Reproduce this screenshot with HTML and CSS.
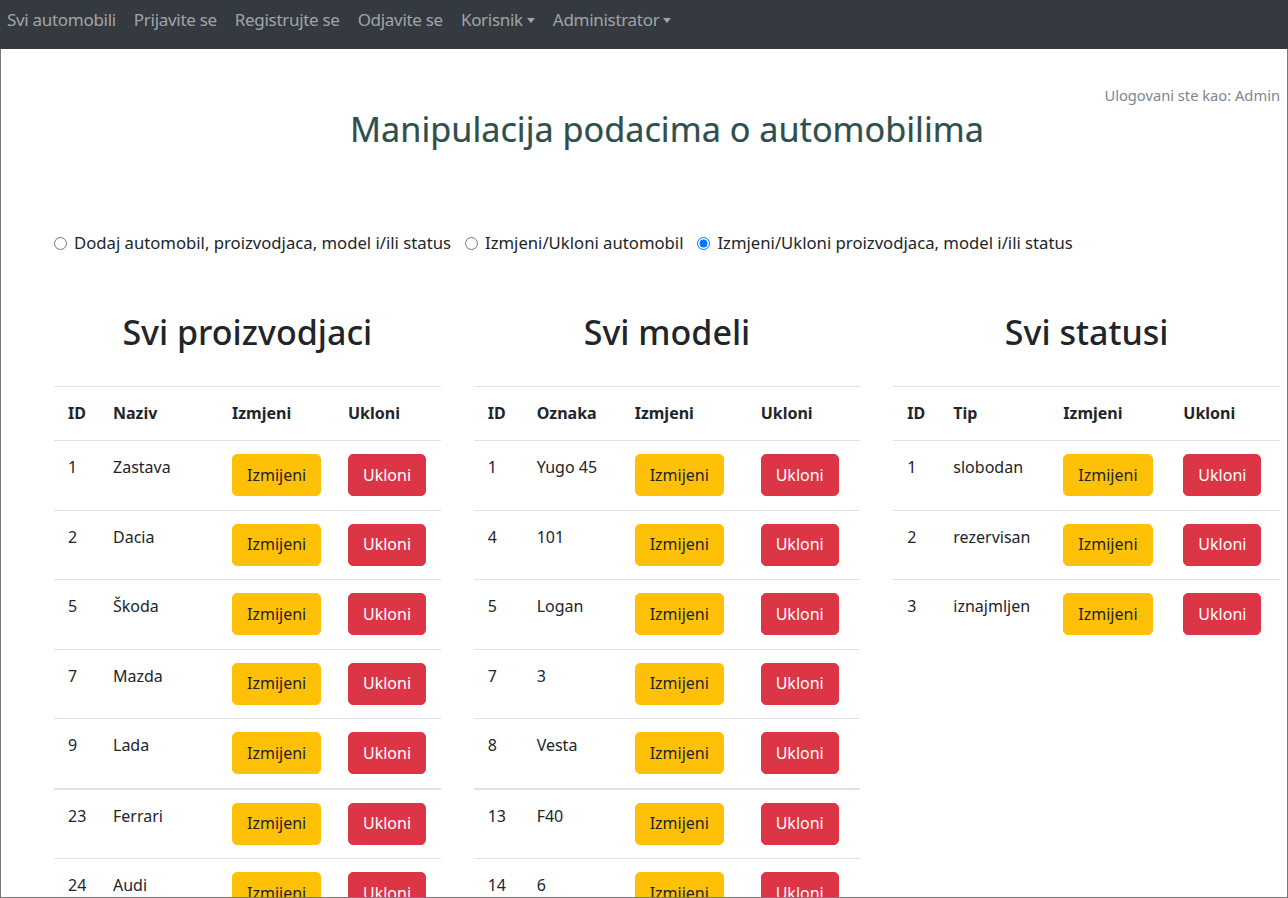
FILE: index.html
```html
<!DOCTYPE html>
<html lang="sr">
<head>
<meta charset="utf-8">
<title>Manipulacija podacima o automobilima</title>
<link rel="stylesheet" href="styles.css">
</head>
<body>
<nav class="navbar">
  <a class="nav-link" href="#">Svi automobili</a>
  <a class="nav-link" href="#">Prijavite se</a>
  <a class="nav-link" href="#">Registrujte se</a>
  <a class="nav-link" href="#">Odjavite se</a>
  <a class="nav-link dropdown" href="#">Korisnik<span class="caret"></span></a>
  <a class="nav-link dropdown" href="#">Administrator<span class="caret"></span></a>
</nav>
<main class="page">
  <p class="logged">Ulogovani ste kao: Admin</p>
  <h2 class="title">Manipulacija podacima o automobilima</h2>
  <div class="radios">
    <label class="radio"><input type="radio" name="mode"> Dodaj automobil, proizvodjaca, model i/ili status</label>
    <label class="radio"><input type="radio" name="mode"> Izmjeni/Ukloni automobil</label>
    <label class="radio"><input type="radio" name="mode" checked> Izmjeni/Ukloni proizvodjaca, model i/ili status</label>
  </div>
  <div class="columns">
    <section class="col">
      <h1 class="col-title">Svi proizvodjaci</h1>
      <table class="table">
        <colgroup><col class="c-id1"><col class="c-name1"><col class="c-edit1"><col></colgroup>
        <thead><tr><th>ID</th><th>Naziv</th><th>Izmjeni</th><th>Ukloni</th></tr></thead>
        <tbody>
          <tr><td>1</td><td>Zastava</td><td><button class="btn btn-warning">Izmijeni</button></td><td><button class="btn btn-danger">Ukloni</button></td></tr>
          <tr><td>2</td><td>Dacia</td><td><button class="btn btn-warning">Izmijeni</button></td><td><button class="btn btn-danger">Ukloni</button></td></tr>
          <tr><td>5</td><td>Škoda</td><td><button class="btn btn-warning">Izmijeni</button></td><td><button class="btn btn-danger">Ukloni</button></td></tr>
          <tr><td>7</td><td>Mazda</td><td><button class="btn btn-warning">Izmijeni</button></td><td><button class="btn btn-danger">Ukloni</button></td></tr>
          <tr><td>9</td><td>Lada</td><td><button class="btn btn-warning">Izmijeni</button></td><td><button class="btn btn-danger">Ukloni</button></td></tr>
        </tbody>
        <tbody>
          <tr><td>23</td><td>Ferrari</td><td><button class="btn btn-warning">Izmijeni</button></td><td><button class="btn btn-danger">Ukloni</button></td></tr>
          <tr><td>24</td><td>Audi</td><td><button class="btn btn-warning">Izmijeni</button></td><td><button class="btn btn-danger">Ukloni</button></td></tr>
        </tbody>
      </table>
    </section>
    <section class="col">
      <h1 class="col-title">Svi modeli</h1>
      <table class="table">
        <colgroup><col class="c-id2"><col class="c-name2"><col class="c-edit2"><col></colgroup>
        <thead><tr><th>ID</th><th>Oznaka</th><th>Izmjeni</th><th>Ukloni</th></tr></thead>
        <tbody>
          <tr><td>1</td><td>Yugo 45</td><td><button class="btn btn-warning">Izmijeni</button></td><td><button class="btn btn-danger">Ukloni</button></td></tr>
          <tr><td>4</td><td>101</td><td><button class="btn btn-warning">Izmijeni</button></td><td><button class="btn btn-danger">Ukloni</button></td></tr>
          <tr><td>5</td><td>Logan</td><td><button class="btn btn-warning">Izmijeni</button></td><td><button class="btn btn-danger">Ukloni</button></td></tr>
          <tr><td>7</td><td>3</td><td><button class="btn btn-warning">Izmijeni</button></td><td><button class="btn btn-danger">Ukloni</button></td></tr>
          <tr><td>8</td><td>Vesta</td><td><button class="btn btn-warning">Izmijeni</button></td><td><button class="btn btn-danger">Ukloni</button></td></tr>
        </tbody>
        <tbody>
          <tr><td>13</td><td>F40</td><td><button class="btn btn-warning">Izmijeni</button></td><td><button class="btn btn-danger">Ukloni</button></td></tr>
          <tr><td>14</td><td>6</td><td><button class="btn btn-warning">Izmijeni</button></td><td><button class="btn btn-danger">Ukloni</button></td></tr>
        </tbody>
      </table>
    </section>
    <section class="col">
      <h1 class="col-title">Svi statusi</h1>
      <table class="table">
        <colgroup><col class="c-id3"><col class="c-name3"><col class="c-edit3"><col></colgroup>
        <thead><tr><th>ID</th><th>Tip</th><th>Izmjeni</th><th>Ukloni</th></tr></thead>
        <tbody>
          <tr><td>1</td><td>slobodan</td><td><button class="btn btn-warning">Izmijeni</button></td><td><button class="btn btn-danger">Ukloni</button></td></tr>
          <tr><td>2</td><td>rezervisan</td><td><button class="btn btn-warning">Izmijeni</button></td><td><button class="btn btn-danger">Ukloni</button></td></tr>
          <tr><td>3</td><td>iznajmljen</td><td><button class="btn btn-warning">Izmijeni</button></td><td><button class="btn btn-danger">Ukloni</button></td></tr>
        </tbody>
      </table>
    </section>
  </div>
</main>
</body>
</html>
```
FILE: styles.css
```css
* { box-sizing: border-box; }
html, body { margin: 0; padding: 0; height: 100%; overflow: hidden; }
body {
  font-family: "Segoe UI", "Noto Sans", "Open Sans", sans-serif;
  color: #212529;
  background: #fff;
  font-size: 16px;
  line-height: 1.5;
  display: flex;
  flex-direction: column;
}
.navbar {
  background: #343a40;
  height: 49px;
  flex: none;
  display: flex;
  align-items: center;
  padding: 0 0 10px 7px;
  gap: 18px;
}
.nav-link {
  color: rgba(255,255,255,.55);
  text-decoration: none;
  font-size: 17px;
  letter-spacing: -0.3px;
}
.caret {
  display: inline-block;
  width: 0; height: 0;
  margin-left: 4px;
  vertical-align: 3px;
  border-top: 5px solid;
  border-left: 4.5px solid transparent;
  border-right: 4.5px solid transparent;
}
.page {
  flex: 1;
  border: 1px solid #7a7a7a;
  border-top: none;
  padding: 0 7px 0 53px;
  overflow: hidden;
}
.logged {
  margin: 36px 0 0;
  text-align: right;
  font-size: 14.7px;
  line-height: 21px;
  color: #7d8590;
}
.title {
  margin: 1px 0 0;
  text-align: center;
  font-size: 34.2px;
  font-weight: 400;
  line-height: 44px;
  color: #2f4f4f;
  -webkit-text-stroke: 0.2px #2f4f4f;
}
.radios {
  margin-top: 80px;
  display: flex;
  gap: 14px;
  font-size: 16.7px;
  line-height: 24px;
}
.radio { display: flex; align-items: center; gap: 7px; }
.radio input { margin: 0; width: 13px; height: 13px; accent-color: #0075ff; }
.columns {
  margin-top: 55px;
  display: grid;
  grid-template-columns: repeat(3, 1fr);
  gap: 33px;
}
.col-title {
  margin: 0 0 32px;
  text-align: center;
  font-size: 34px;
  font-weight: 500;
  line-height: 44px;
}
.table {
  width: 100%;
  border-collapse: collapse;
  table-layout: fixed;
  font-size: 16px;
}
.c-id1 { width: 45px; }
.c-name1 { width: 119px; }
.c-edit1 { width: 116px; }
.c-id2 { width: 49px; }
.c-name2 { width: 98px; }
.c-edit2 { width: 126px; }
.c-id3 { width: 46px; }
.c-name3 { width: 110px; }
.c-edit3 { width: 120px; }
.table th, .table td {
  text-align: left;
  vertical-align: top;
  padding: 13.25px 14px;
  line-height: 27px;
  border-top: 1px solid #dee2e6;
}
.table th { font-weight: 700; padding-top: 12.75px; }
.table thead th { border-bottom: 1px solid #dee2e6; }
.table tbody + tbody { border-top: 2px solid #dee2e6; }
.btn {
  font-family: inherit;
  font-size: 16px;
  line-height: 27px;
  padding: 6.5px 14px;
  border: 1px solid transparent;
  border-radius: 5px;
  cursor: pointer;
}
.btn-warning { background: #ffc107; border-color: #ffc107; color: #212529; }
.btn-danger { background: #dc3545; border-color: #dc3545; color: #fff; }
```
